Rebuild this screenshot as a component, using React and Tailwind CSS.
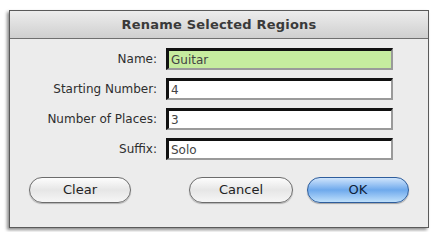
export default function App() {
  const font = { fontFamily: '"DejaVu Sans", "Liberation Sans", sans-serif' };

  const fields = [
    { label: 'Name:', value: 'Guitar', active: true },
    { label: 'Starting Number:', value: '4' },
    { label: 'Number of Places:', value: '3' },
    { label: 'Suffix:', value: 'Solo' },
  ];

  return (
    <div className="w-[435px] h-[232px] bg-white pt-[10px] pl-[9px]" style={font}>
      <div className="w-[420px] h-[218px] flex flex-col bg-[#ececec] border border-[#5a5a5a] shadow-[-2px_2px_3px_rgba(0,0,0,0.45)]">
        {/* Title bar */}
        <div className="h-[28px] flex items-center justify-center bg-gradient-to-b from-[#ededed] to-[#cfcfcf] border-b border-[#6f6f6f]">
          <span className="text-[13px] font-semibold text-[#3a3a3a] tracking-[0.2px]">Rename Selected Regions</span>
        </div>

        {/* Fields */}
        <div className="flex flex-col gap-[8px] pt-[9px]">
          {fields.map((f) => (
            <div key={f.label} className="flex items-center h-[22px]">
              <div className="w-[148px] text-right text-[12px] text-[#2e2e2e] pr-[1px]">{f.label}</div>
              <div
                className={`ml-[8px] w-[227px] h-[22px] flex items-center pl-[2px] border-t-[3px] border-l-[3px] border-r-[2px] border-b-[2px] border-t-[#111] border-l-[#111] border-r-[#9a9a9a] border-b-[#9a9a9a] text-[12px] text-[#444] ${
                  f.active ? 'bg-[#c6ec9f]' : 'bg-white'
                }`}
              >
                {f.value}
              </div>
            </div>
          ))}
        </div>

        {/* Buttons */}
        <div className="flex items-center mt-[17px] px-[19px]">
          <button className="w-[102px] h-[26px] rounded-full border border-[#6c6c6c] bg-gradient-to-b from-[#fdfdfd] via-[#e6e6e6] to-[#f6f6f6] text-[13px] text-[#222] shadow-[0_1px_1px_rgba(0,0,0,0.25)]">
            Clear
          </button>
          <div className="flex-1" />
          <button className="w-[104px] h-[26px] rounded-full border border-[#6c6c6c] bg-gradient-to-b from-[#fdfdfd] via-[#e6e6e6] to-[#f6f6f6] text-[13px] text-[#222] shadow-[0_1px_1px_rgba(0,0,0,0.25)]">
            Cancel
          </button>
          <button className="ml-[14px] w-[102px] h-[26px] rounded-full border border-[#2e5d9c] bg-gradient-to-b from-[#cfe4fb] via-[#6ea9ec] to-[#bfe0fb] text-[13px] text-[#0f1f3a] shadow-[0_1px_1px_rgba(0,0,0,0.3)]">
            OK
          </button>
        </div>
      </div>
    </div>
  );
}
